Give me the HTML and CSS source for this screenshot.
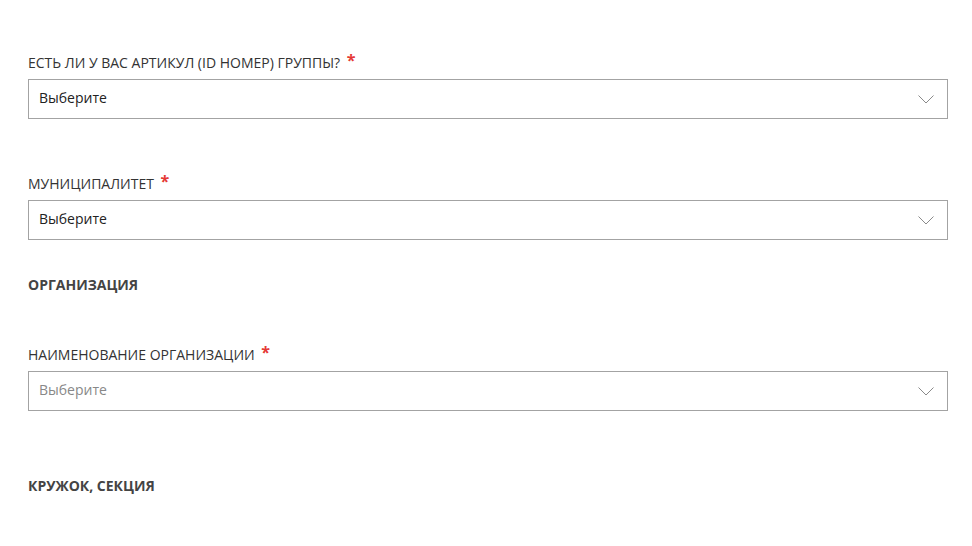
FILE: index.html
```html
<html>
<head>
    <title>Заявка</title>
    <link rel="stylesheet" href="styles.css">
</head>
<body>
    <div class="form">
        <div class="field first">
            <label>Есть ли у вас артикул (ID номер) группы? <span class="req">*</span></label>
            <div class="select">
                <span>Выберите</span>
                <svg class="chevron" width="16" height="9" viewBox="0 0 16 9"><path d="M0.5 0.5 L8 8 L15.5 0.5" fill="none" stroke="#8a8a8a" stroke-width="1"/></svg>
            </div>
        </div>
        <div class="field">
            <label>Муниципалитет <span class="req">*</span></label>
            <div class="select">
                <span>Выберите</span>
                <svg class="chevron" width="16" height="9" viewBox="0 0 16 9"><path d="M0.5 0.5 L8 8 L15.5 0.5" fill="none" stroke="#8a8a8a" stroke-width="1"/></svg>
            </div>
        </div>
        <h3 class="section org">Организация</h3>
        <div class="field third">
            <label>Наименование организации <span class="req">*</span></label>
            <div class="select empty">
                <span>Выберите</span>
                <svg class="chevron" width="16" height="9" viewBox="0 0 16 9"><path d="M0.5 0.5 L8 8 L15.5 0.5" fill="none" stroke="#8a8a8a" stroke-width="1"/></svg>
            </div>
        </div>
        <h3 class="section club">Кружок, секция</h3>
    </div>
</body>
</html>
```
FILE: styles.css
```css
body {
    margin: 0;
    background-color: #fff;
    font-family: "Open Sans", Arial, sans-serif;
    color: #333;
}
.form {
    padding: 53px 24px 0 28px;
}
.field {
    margin-top: 55px;
}
.field.first {
    margin-top: 0;
}
.field.third {
    margin-top: 50px;
}
label {
    display: block;
    font-size: 14px;
    line-height: 20px;
    text-transform: uppercase;
    color: #333;
    margin-bottom: 6px;
}
.req {
    color: #e53935;
    font-size: 16px;
    font-weight: 700;
    line-height: 0;
    vertical-align: 2px;
    margin-left: 3px;
}
.select {
    display: flex;
    align-items: center;
    justify-content: space-between;
    height: 34px;
    border: 1px solid #a3a3a3;
    padding: 0 13px 4px 10px;
    font-size: 14px;
    color: #222;
}
.chevron {
    margin-top: 4px;
}
.select.empty {
    color: #888;
}
.section {
    margin: 0;
    font-size: 14px;
    line-height: 20px;
    font-weight: 700;
    text-transform: uppercase;
    color: #444;
}
.section.org {
    margin-top: 35px;
}
.section.club {
    margin-top: 65px;
}
```
